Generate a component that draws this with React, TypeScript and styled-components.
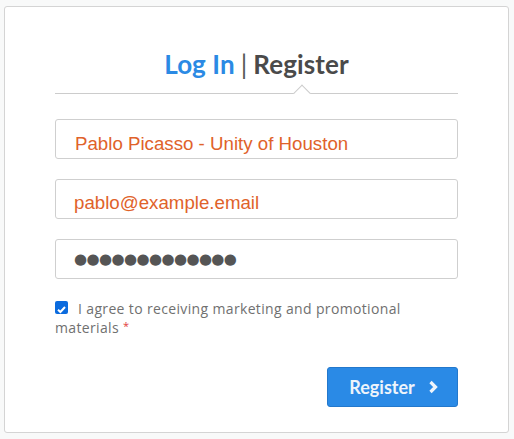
import React from "react";
import styled, { createGlobalStyle } from "styled-components";

const Global = createGlobalStyle`
  html, body { margin: 0; padding: 0; background: #f8f9f9; }
  * { box-sizing: border-box; }
`;

const Page = styled.div`
  padding: 6px 5px 6px 4px;
  width: 514px;
  height: 439px;
`;

const Card = styled.div`
  width: 505px;
  height: 427px;
  background: #ffffff;
  border: 1px solid #d4d4d4;
  border-radius: 3px;
  padding: 40px 50px 0 50px;
  display: flex;
  flex-direction: column;
`;

const Title = styled.div`
  font-family: "Lato", sans-serif;
  font-weight: 700;
  font-size: 26px;
  line-height: 34px;
  text-align: center;
  color: #4a4a4a;
  letter-spacing: 0.1px;
`;

const TabLink = styled.span<{ $active?: boolean }>`
  color: ${(p) => (p.$active ? "#2b8ae4" : "#4a4a4a")};
`;

const Sep = styled.span`
  font-weight: 400;
  color: #555;
  margin: 0 6px;
`;

const Divider = styled.div`
  position: relative;
  height: 1px;
  background: #cccccc;
  margin-top: 12px;
  margin-bottom: 25px;
`;

const Notch = styled.div`
  position: absolute;
  left: 241px;
  top: -6px;
  width: 12px;
  height: 12px;
  background: #ffffff;
  border-left: 1px solid #cccccc;
  border-top: 1px solid #cccccc;
  transform: rotate(45deg);
`;

const Fields = styled.div`
  display: flex;
  flex-direction: column;
  gap: 20px;
`;

const Field = styled.div<{ $pad?: number; $drop?: number }>`
  height: 40px;
  border: 1px solid #cfcfcf;
  border-radius: 3px;
  display: flex;
  align-items: center;
  padding-left: ${(p) => p.$pad ?? 19}px;
  padding-top: ${(p) => p.$drop ?? 0}px;
  font-family: "Liberation Sans", Arial, sans-serif;
  font-size: 18.7px;
  color: #e0622a;
`;

const Dots = styled.span`
  font-family: "DejaVu Sans", sans-serif;
  font-size: 15px;
  letter-spacing: -0.6px;
  color: #555555;
`;

const Agree = styled.div`
  margin-top: 20px;
  font-family: "Open Sans", sans-serif;
  font-size: 14px;
  letter-spacing: 0.35px;
  line-height: 19px;
  color: #707070;
`;

const Check = styled.span`
  display: inline-block;
  vertical-align: -2px;
  width: 13px;
  height: 13px;
  border-radius: 2px;
  background: #0b6bde;
  margin-right: 10px;
`;

const Tail = styled.span`
  display: inline-block;
  white-space: nowrap;
`;

const Star = styled.span`
  display: inline-block;
  color: #e23b3b;
  font-size: 11px;
  line-height: 11px;
  vertical-align: 3px;
  margin-left: 4px;
`;

const Actions = styled.div`
  display: flex;
  justify-content: flex-end;
  margin-top: 30px;
`;

const Button = styled.button`
  width: 131px;
  height: 40px;
  background: #2a8ae6;
  border: 1px solid #2378cc;
  border-radius: 3px;
  color: #eef4fb;
  font-family: "Lato", sans-serif;
  font-weight: 700;
  font-size: 18px;
  display: flex;
  align-items: center;
  justify-content: center;
  gap: 13px;
  padding: 0 0 0 2px;
`;

export default function App() {
  return (
    <>
      <Global />
      <Page>
        <Card>
          <Title>
            <TabLink $active>Log In</TabLink>
            <Sep>|</Sep>
            <TabLink>Register</TabLink>
          </Title>
          <Divider>
            <Notch />
          </Divider>
          <Fields>
            <Field $pad={19} $drop={10}>Pablo Picasso - Unity of Houston</Field>
            <Field $pad={18} $drop={7}>pablo@example.email</Field>
            <Field $pad={18}>
              <Dots>●●●●●●●●●●●●●</Dots>
            </Field>
          </Fields>
          <Agree>
            <Check>
              <svg width="13" height="13" viewBox="0 0 13 13">
                <path d="M3 6.8 L5.4 9 L10 4" fill="none" stroke="#fff" strokeWidth="2" />
              </svg>
            </Check>
            I agree to receiving marketing and promotional{" "}
            <Tail>
              materials<Star>*</Star>
            </Tail>
          </Agree>
          <Actions>
            <Button>
              Register
              <svg width="10" height="14" viewBox="0 0 10 14">
                <path d="M2.5 2 L7.5 7 L2.5 12" fill="none" stroke="#eef4fb" strokeWidth="3.2" />
              </svg>
            </Button>
          </Actions>
        </Card>
      </Page>
    </>
  );
}
